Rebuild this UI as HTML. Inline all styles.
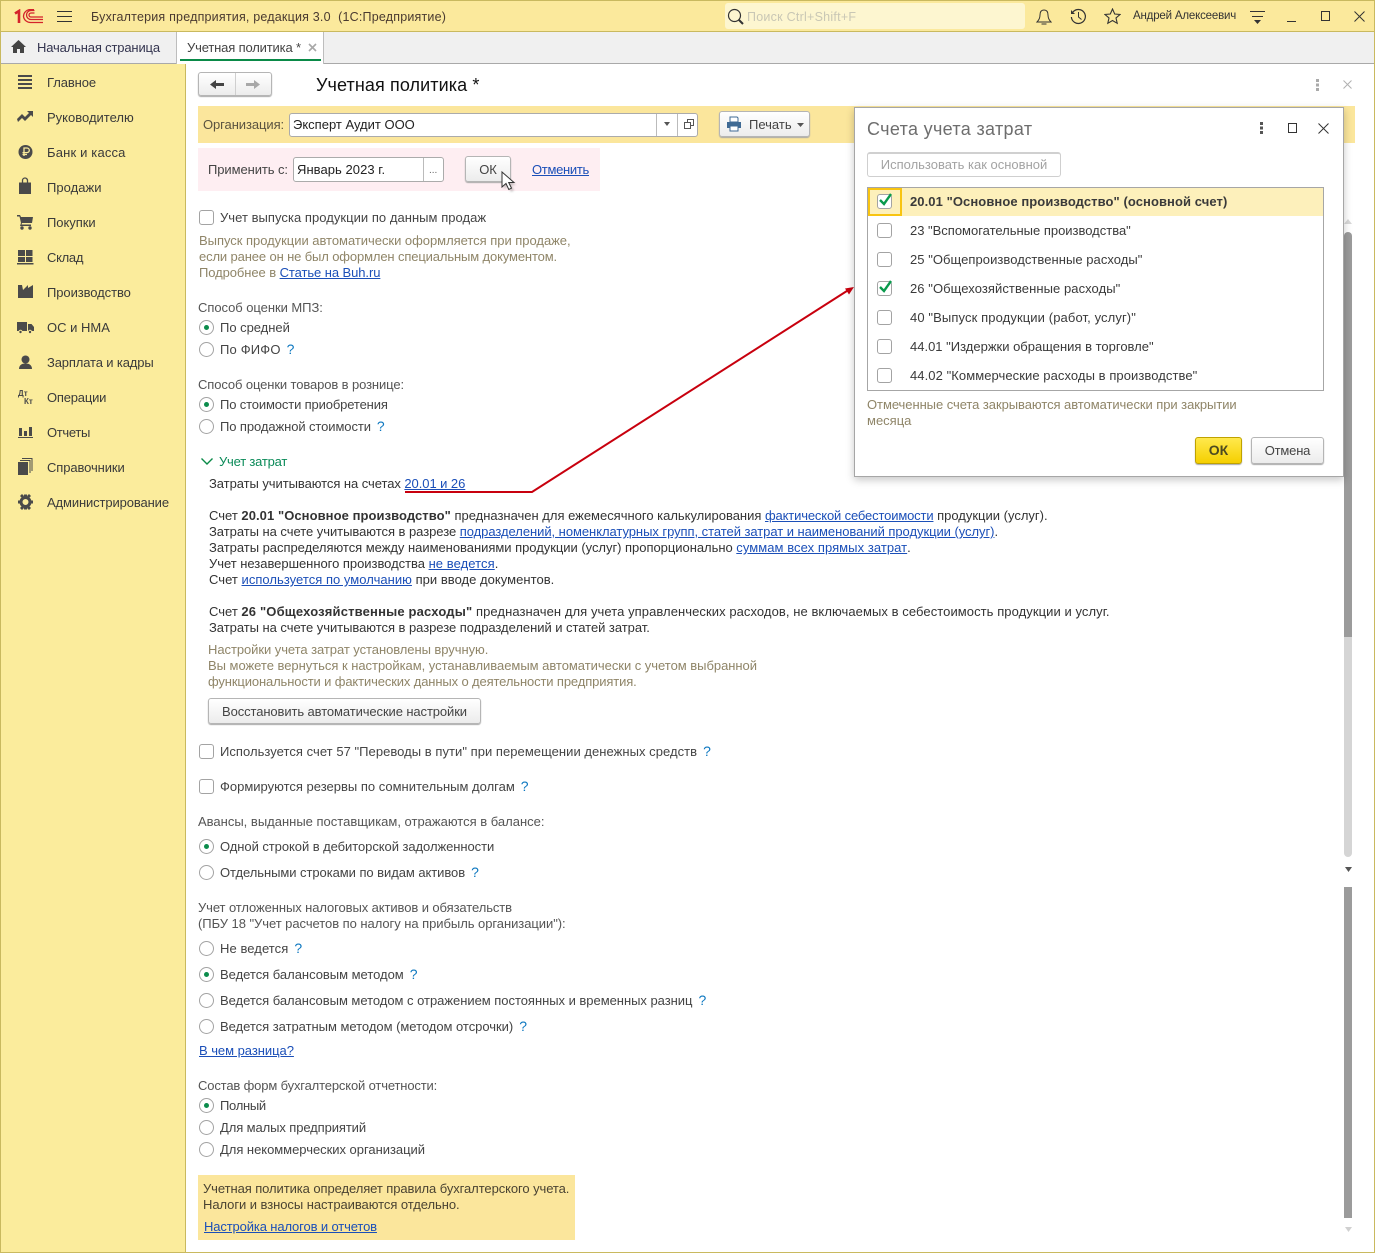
<!DOCTYPE html>
<html lang="ru"><head><meta charset="utf-8"><title>Учетная политика</title>
<style>
html,body{margin:0;padding:0;background:#fff}
#r{position:relative;width:1375px;height:1255px;overflow:hidden;font:13px/16px "Liberation Sans",sans-serif;color:#3d3d3d;letter-spacing:-.04px}
#r div,#r svg{position:absolute}
.t{white-space:nowrap}
.g{color:#8f8568}
a,.a{color:#1b4fb8;text-decoration:underline}
.q{color:#0e78c0;font-weight:400;margin-left:6px;font-size:14px;line-height:0;letter-spacing:0}
.b{background:linear-gradient(#fff,#ececec);border:1px solid #b5b5b5;border-radius:3px;box-shadow:0 1px 1px #a8a8a8;box-sizing:border-box;text-align:center}
.c{width:15px;height:15px;border:1px solid #a3a3a3;border-radius:3px;box-sizing:border-box;background:#fff}
.o{width:15px;height:15px;border:1px solid #a3a3a3;border-radius:50%;box-sizing:border-box;background:#fff}
.o.s::after{content:"";position:absolute;left:4px;top:4px;width:5px;height:5px;border-radius:50%;background:#0c8c4c}
.f{background:#fff;border:1px solid #ababab;border-radius:3px;box-sizing:border-box}
.m{left:47px;color:#3a3a3a}
</style></head><body><div id="r">

<!-- frame -->
<div style="left:0;top:0;width:1375px;height:32px;background:#fbe99c;border-top:1px solid #c9b95f;border-bottom:1px solid #c9b95f;box-sizing:border-box"></div>
<div style="left:0;top:32px;width:1375px;height:32px;background:#f0f0f0;border-bottom:1px solid #a9a9a9;box-sizing:border-box"></div>
<div style="left:0;top:64px;width:186px;height:1189px;background:#fbec9c;border-right:1px solid #c9b95f;box-sizing:border-box"></div>
<div style="left:0;top:0;width:1px;height:1253px;background:#c9b95f"></div>
<div style="left:1374px;top:0;width:1px;height:1253px;background:#c9b95f"></div>
<div style="left:0;top:1252px;width:1375px;height:1px;background:#c9b95f"></div>

<!-- title bar -->
<svg style="left:14px;top:9px" width="30" height="15" viewBox="0 0 30 15"><g fill="none" stroke="#d4232b"><path d="M1 4.500 5 2V14" stroke-width="2.600"/><path d="M29 10.500H17a4.500 4.500 0 0 1 0-9h3.500M29 13.500H16.500a7 7 0 0 1-7-6 7 7 0 0 1 7-7H20M20.500 4H17a2 2 0 0 0 0 4h12" stroke-width="1.300"/></g></svg>
<svg style="left:57px;top:11px" width="15" height="12"><path d="M0 .5h15M0 5.500h15M0 10.500h15" stroke="#333" stroke-width="1"/></svg>
<div class="t" style="left:91px;top:9px;color:#4a3a30;font-size:12.5px;letter-spacing:.2px">Бухгалтерия предприятия, редакция 3.0&nbsp; (1С:Предприятие)</div>
<div style="left:725px;top:3px;width:300px;height:26px;background:#fdf6d0;border-radius:3px"></div>
<svg style="left:727px;top:8px" width="18" height="18"><circle cx="7.500" cy="7.500" r="6" fill="none" stroke="#333" stroke-width="1.200"/><path d="M12 12l4 4" stroke="#333" stroke-width="2"/></svg>
<div class="t" style="left:747px;top:9px;color:#c9c7b5;font-size:12.5px;letter-spacing:.25px">Поиск Ctrl+Shift+F</div>
<svg style="left:1036px;top:8px" width="16" height="18"><path d="M8 2C5 2 4 4 4 7c0 3-1 5-3 7h14c-2-2-3-4-3-7 0-3-1-5-4-5z" fill="none" stroke="#333"/><path d="M5.500 15.500h5v1h-5z" fill="#333"/></svg>
<svg style="left:1070px;top:8px" width="17" height="17"><path d="M3 4a7 7 0 1 1-1.600 5" fill="none" stroke="#333" stroke-width="1.200"/><path d="M1 2v4h4z" fill="#333"/><path d="M8.500 4v5l3 2.500" fill="none" stroke="#333"/></svg>
<svg style="left:1104px;top:8px" width="17" height="17"><path d="M8.500 1l2.200 5 5.300.5-4 3.500 1.200 5.300-4.700-2.800-4.700 2.800L5 10 1 6.500 6.300 6z" fill="none" stroke="#333" stroke-width="1.100"/></svg>
<div class="t" style="left:1133px;top:8px;font-size:11.5px;letter-spacing:-.18px;color:#333">Андрей Алексеевич</div>
<svg style="left:1250px;top:11px" width="16" height="14"><path d="M0 .5h15M2 5.500h11" stroke="#333"/><path d="M4 9h7l-3.500 4z" fill="#333"/></svg>
<svg style="left:1287px;top:12px" width="10" height="10"><path d="M0 9.500h9" stroke="#333"/></svg>
<svg style="left:1321px;top:11px" width="10" height="11"><rect x=".5" y=".5" width="8" height="9" fill="none" stroke="#333"/></svg>
<svg style="left:1354px;top:11px" width="11" height="11"><path d="M.5.500l10 10M10.500.500l-10 10" stroke="#333"/></svg>

<!-- tabs -->
<svg style="left:11px;top:40px" width="15" height="13"><path d="M7.500 0 15 7h-2v6H9V9H6v4H2V7H0z" fill="#444"/></svg>
<div class="t" style="left:37px;top:40px;color:#33344f;letter-spacing:-.16px">Начальная страница</div>
<div style="left:176px;top:32px;width:148px;height:32px;background:#fff;border-left:1px solid #bdbdbd;border-right:1px solid #bdbdbd;box-sizing:border-box"></div>
<div class="t" style="left:187px;top:40px;color:#444;letter-spacing:-.16px">Учетная политика *</div>
<svg style="left:308px;top:43px" width="9" height="9"><path d="M1 1l7 7M8 1L1 8" stroke="#a8a8a8" stroke-width="1.600"/></svg>
<div style="left:180px;top:59px;width:141px;height:2px;background:#0a8a48"></div>

<!-- sidebar -->
<div class="t m" style="top:75px;letter-spacing:-.1px">Главное</div>
<div class="t m" style="top:110px;letter-spacing:0">Руководителю</div>
<div class="t m" style="top:145px;letter-spacing:.17px">Банк и касса</div>
<div class="t m" style="top:180px;letter-spacing:.03px">Продажи</div>
<div class="t m" style="top:215px;letter-spacing:-.05px">Покупки</div>
<div class="t m" style="top:250px;letter-spacing:-.3px">Склад</div>
<div class="t m" style="top:285px;letter-spacing:-.08px">Производство</div>
<div class="t m" style="top:320px;letter-spacing:0">ОС и НМА</div>
<div class="t m" style="top:355px;letter-spacing:-.14px">Зарплата и кадры</div>
<div class="t m" style="top:390px;letter-spacing:-.2px">Операции</div>
<div class="t m" style="top:425px;letter-spacing:-.33px">Отчеты</div>
<div class="t m" style="top:460px;letter-spacing:-.1px">Справочники</div>
<div class="t m" style="top:495px;letter-spacing:-.12px">Администрирование</div>
<svg style="left:17px;top:74px" width="17" height="440" fill="#4a4a4a">
<path d="M1 1h14v2H1zM1 5h14v2H1zM1 9h14v2H1zM1 13h14v2H1z"/>
<path d="M0 45l5-5 3 3 4-4-2-2h6v6l-2-2-6 6-3-3-4 4z"/>
<circle cx="8.500" cy="78" r="7"/><path d="M7 82v-8h3a2.300 2.300 0 0 1 0 4.600H5.500M5.500 80.500H10" fill="none" stroke="#fbec9c" stroke-width="1.300"/>
<path d="M2 108.500h12v11.500H2z"/><path d="M5.500 108.500v-2a2.500 2.500 0 0 1 5 0v2" fill="none" stroke="#4a4a4a" stroke-width="1.300"/>
<path d="M0 141h3l1 2h12l-1 6H5l-.5 1.500H14V152H3l1-3L2.500 142.500H0z"/><circle cx="5" cy="154" r="1.700"/><circle cx="13" cy="154" r="1.700"/>
<path d="M1 176h7v6H1zM9 176h6.500v6H9zM1 183h7v5H1zM9 183h6.500v5H9zM0 189h16.500v1.500H0z"/>
<path d="M1 224V211h4l1 5 5-5v3l5-3v13z"/>
<path d="M0 248h10v9H0zM11 250h3.500l2.500 3v4h-6z"/><circle cx="3.500" cy="258" r="1.700" stroke="#fbec9c"/><circle cx="13" cy="258" r="1.700" stroke="#fbec9c"/>
<circle cx="8.500" cy="285.500" r="4"/><path d="M2 295c0-4 3-5.500 6.500-5.500s6.500 1.500 6.500 5.500z"/>
<text x="1" y="322" font-size="8" font-weight="700" style="letter-spacing:0">Дт</text><text x="7" y="330" font-size="8" font-weight="700" style="letter-spacing:0">Кт</text>
<path d="M2 354h3v8H2zM7 357h3v5H7zM12 353h3v9H12zM1 363h15v1H1z"/>
<path d="M1 388h10v13H1zM12.500 386h1v13h-1zM14.500 384h1v13h-1zM3 386h10v1H3zM5 384h10v1H5z"/>
<circle cx="8.500" cy="428" r="4.500" fill="none" stroke="#4a4a4a" stroke-width="3"/><path d="M7 420.500h3v3H7zM7 432.500h3v3H7zM1 426.500h3v3H1zM13 426.500h3v3h-3zM3 422l2-2 2 2-2 2zM10 422l2-2 2 2-2 2zM3 434l2 2 2-2-2-2zM10 434l2 2 2-2-2-2z"/>
</svg>

<!-- header -->
<div class="b" style="left:198px;top:72px;width:74px;height:24px"></div>
<div style="left:235px;top:73px;width:1px;height:22px;background:#cfcfcf"></div>
<svg style="left:210px;top:79px" width="15" height="11"><path d="M0 5.500 6 1v3h8v3H6v3z" fill="#444"/></svg>
<svg style="left:246px;top:79px" width="15" height="11"><path d="M14 5.500 8 1v3H0v3h8v3z" fill="#a8a8a8"/></svg>
<div class="t" style="left:316px;top:74px;font-size:18px;line-height:22px;color:#111;letter-spacing:.1px">Учетная политика *</div>
<svg style="left:1315px;top:79px" width="5" height="13" fill="#aaa"><rect x="1" y="0" width="3" height="3"/><rect x="1" y="4.500" width="3" height="3"/><rect x="1" y="9" width="3" height="3"/></svg>
<svg style="left:1343px;top:80px" width="9" height="9"><path d="M.5.500l8 8M8.500.500l-8 8" stroke="#b0b0b0"/></svg>

<!-- org bar -->
<div style="left:198px;top:106px;width:1157px;height:37px;background:#fbe69c"></div>
<div class="t" style="left:203px;top:117px;color:#5a5340;letter-spacing:-.08px">Организация:</div>
<div class="f" style="left:289px;top:113px;width:409px;height:24px"></div>
<div style="left:656px;top:114px;width:1px;height:22px;background:#bbb"></div>
<div style="left:677px;top:114px;width:1px;height:22px;background:#bbb"></div>
<div class="t" style="left:293px;top:117px;color:#222;letter-spacing:0">Эксперт Аудит ООО</div>
<svg style="left:663px;top:122px" width="8" height="5"><path d="M1 0h6L4 4z" fill="#555"/></svg>
<svg style="left:684px;top:119px" width="11" height="11"><path d="M3.500 3V.5h6v6H7M.5 3.500h6v6h-6z" fill="none" stroke="#555"/></svg>
<div class="b" style="left:719px;top:111px;width:91px;height:26px"></div>
<svg style="left:726px;top:116px" width="16" height="16"><path d="M4 1h7l1 1v4H4z" fill="#fff" stroke="#3f6a94"/><path d="M1 6h14v6H1z" fill="#3f6a94"/><path d="M4 10h8v5H4z" fill="#fff" stroke="#3f6a94"/></svg>
<div class="t" style="left:749px;top:117px;color:#444;letter-spacing:0">Печать</div>
<svg style="left:797px;top:123px" width="7" height="4"><path d="M0 0h7L3.500 4z" fill="#555"/></svg>

<!-- apply -->
<div style="left:198px;top:148px;width:402px;height:43px;background:#feeef2"></div>
<div class="t" style="left:208px;top:162px;color:#444;letter-spacing:-.08px">Применить с:</div>
<div class="f" style="left:293px;top:157px;width:151px;height:25px"></div>
<div style="left:423px;top:158px;width:1px;height:23px;background:#bbb"></div>
<div class="t" style="left:297px;top:162px;color:#222;letter-spacing:.05px">Январь 2023 г.</div>
<div class="t" style="left:429px;top:163px;color:#666;font-size:10px">...</div>
<div class="b" style="left:465px;top:156px;width:46px;height:26px;line-height:25px;color:#444">ОК</div>
<div class="t a" style="left:532px;top:162px;letter-spacing:-.3px">Отменить</div>
<svg style="left:498px;top:168px" width="22" height="26"><path d="M6 7v14l4-3 3 6 3-1.500-3-5.500h5z" fill="#777" opacity=".4" filter="blur(1px)"/><path d="M4 4v15l4-3.500 2.800 6 2.700-1.300-2.800-5.700H16z" fill="#fff" stroke="#333"/></svg>

<!-- content -->
<div class="c" style="left:199px;top:210px"></div>
<div class="t" style="left:220px;top:210px;color:#444;letter-spacing:.04px">Учет выпуска продукции по данным продаж</div>
<div class="t g" style="left:199px;top:233px;letter-spacing:-.03px">Выпуск продукции автоматически оформляется при продаже,</div>
<div class="t g" style="left:199px;top:249px;letter-spacing:-.13px">если ранее он не был оформлен специальным документом.</div>
<div class="t g" style="left:199px;top:265px;letter-spacing:-.08px">Подробнее в <a>Статье на Buh.ru</a></div>

<div class="t" style="left:198px;top:300px;color:#555;letter-spacing:-.05px">Способ оценки МПЗ:</div>
<div class="o s" style="left:199px;top:320px"></div><div class="t" style="left:220px;top:320px;color:#444;letter-spacing:-.03px">По средней</div>
<div class="o" style="left:199px;top:342px"></div><div class="t" style="left:220px;top:342px;color:#444;letter-spacing:.17px">По ФИФО<span class="q">?</span></div>

<div class="t" style="left:198px;top:377px;color:#555;letter-spacing:-.11px">Способ оценки товаров в рознице:</div>
<div class="o s" style="left:199px;top:397px"></div><div class="t" style="left:220px;top:397px;color:#444;letter-spacing:-.14px">По стоимости приобретения</div>
<div class="o" style="left:199px;top:419px"></div><div class="t" style="left:220px;top:419px;color:#444;letter-spacing:-.09px">По продажной стоимости<span class="q">?</span></div>

<svg style="left:200px;top:457px" width="14" height="9"><path d="M1.500 1.500 7 7l5.500-5.500" fill="none" stroke="#0a8a48" stroke-width="1.400"/></svg>
<div class="t" style="left:219px;top:454px;color:#0a8a58;letter-spacing:-.2px">Учет затрат</div>
<div class="t" style="left:209px;top:476px;color:#333;letter-spacing:-.06px">Затраты учитываются на счетах <a>20.01 и 26</a></div>

<div class="t" style="left:209px;top:508px;color:#333;letter-spacing:-.01px"><span style="letter-spacing:0">Счет </span><b style="letter-spacing:.07px">20.01 "Основное производство"</b> предназначен для ежемесячного калькулирования <a style="letter-spacing:-.15px">фактической себестоимости</a> <span style="letter-spacing:0">продукции (услуг).</span></div>
<div class="t" style="left:209px;top:524px;color:#333;letter-spacing:-.04px">Затраты на счете учитываются в разрезе <a style="letter-spacing:-.05px">подразделений, номенклатурных групп, статей затрат и наименований продукции (услуг)</a>.</div>
<div class="t" style="left:209px;top:540px;color:#333;letter-spacing:-.03px">Затраты распределяются между наименованиями продукции (услуг) пропорционально <a style="letter-spacing:.06px">суммам всех прямых затрат</a>.</div>
<div class="t" style="left:209px;top:556px;color:#333;letter-spacing:-.03px">Учет незавершенного производства <a style="letter-spacing:.07px">не ведется</a>.</div>
<div class="t" style="left:209px;top:572px;color:#333;letter-spacing:.03px">Счет <a>используется по умолчанию</a> при вводе документов.</div>
<div class="t" style="left:209px;top:604px;color:#333;letter-spacing:.07px"><span style="letter-spacing:0">Счет </span><b style="letter-spacing:.17px">26 "Общехозяйственные расходы"</b> предназначен для учета управленческих расходов, не включаемых в себестоимость продукции и услуг.</div>
<div class="t" style="left:209px;top:620px;color:#333;letter-spacing:-.04px">Затраты на счете учитываются в разрезе подразделений и статей затрат.</div>
<div class="t g" style="left:208px;top:642px;letter-spacing:-.06px">Настройки учета затрат установлены вручную.</div>
<div class="t g" style="left:208px;top:658px;letter-spacing:-.03px">Вы можете вернуться к настройкам, устанавливаемым автоматически с учетом выбранной</div>
<div class="t g" style="left:208px;top:674px;letter-spacing:-.13px">функциональности и фактических данных о деятельности предприятия.</div>
<div class="b" style="left:208px;top:698px;width:273px;height:26px;line-height:26px;color:#444;letter-spacing:-.1px">Восстановить автоматические настройки</div>

<div class="c" style="left:199px;top:744px"></div><div class="t" style="left:220px;top:744px;color:#444;letter-spacing:.04px">Используется счет 57 "Переводы в пути" при перемещении денежных средств<span class="q">?</span></div>
<div class="c" style="left:199px;top:779px"></div><div class="t" style="left:220px;top:779px;color:#444;letter-spacing:0">Формируются резервы по сомнительным долгам<span class="q">?</span></div>

<div class="t" style="left:198px;top:814px;color:#555;letter-spacing:0">Авансы, выданные поставщикам, отражаются в балансе:</div>
<div class="o s" style="left:199px;top:839px"></div><div class="t" style="left:220px;top:839px;color:#444;letter-spacing:-.06px">Одной строкой в дебиторской задолженности</div>
<div class="o" style="left:199px;top:865px"></div><div class="t" style="left:220px;top:865px;color:#444;letter-spacing:-.06px">Отдельными строками по видам активов<span class="q">?</span></div>

<div class="t" style="left:198px;top:900px;color:#555;letter-spacing:-.09px">Учет отложенных налоговых активов и обязательств</div>
<div class="t" style="left:198px;top:916px;color:#555;letter-spacing:-.05px">(ПБУ 18 "Учет расчетов по налогу на прибыль организации"):</div>
<div class="o" style="left:199px;top:941px"></div><div class="t" style="left:220px;top:941px;color:#444;letter-spacing:.07px">Не ведется<span class="q">?</span></div>
<div class="o s" style="left:199px;top:967px"></div><div class="t" style="left:220px;top:967px;color:#444;letter-spacing:-.02px">Ведется балансовым методом<span class="q">?</span></div>
<div class="o" style="left:199px;top:993px"></div><div class="t" style="left:220px;top:993px;color:#444;letter-spacing:-.03px">Ведется балансовым методом с отражением постоянных и временных разниц<span class="q">?</span></div>
<div class="o" style="left:199px;top:1019px"></div><div class="t" style="left:220px;top:1019px;color:#444;letter-spacing:-.03px">Ведется затратным методом (методом отсрочки)<span class="q">?</span></div>
<div class="t a" style="left:199px;top:1043px;letter-spacing:-.04px">В чем разница?</div>

<div class="t" style="left:198px;top:1078px;color:#555;letter-spacing:-.15px">Состав форм бухгалтерской отчетности:</div>
<div class="o s" style="left:199px;top:1098px"></div><div class="t" style="left:220px;top:1098px;color:#444;letter-spacing:-.3px">Полный</div>
<div class="o" style="left:199px;top:1120px"></div><div class="t" style="left:220px;top:1120px;color:#444;letter-spacing:-.1px">Для малых предприятий</div>
<div class="o" style="left:199px;top:1142px"></div><div class="t" style="left:220px;top:1142px;color:#444;letter-spacing:-.03px">Для некоммерческих организаций</div>

<div style="left:198px;top:1175px;width:377px;height:65px;background:#fbe69c"></div>
<div class="t" style="left:203px;top:1181px;color:#4a4332;letter-spacing:-.08px">Учетная политика определяет правила бухгалтерского учета.</div>
<div class="t" style="left:203px;top:1197px;color:#4a4332;letter-spacing:-.06px">Налоги и взносы настраиваются отдельно.</div>
<div class="t a" style="left:204px;top:1219px;letter-spacing:-.13px">Настройка налогов и отчетов</div>

<!-- scrollbars -->
<svg style="left:1344px;top:215px" width="9" height="1020">
<path d="M0 9 4 4l4 5z" fill="#d8d8d8"/>
<path d="M0 21a4 4 0 0 1 8 0V422H0z" fill="#9b9b9b"/>
<path d="M0 422h8v216a4 4 0 0 1-8 0z" fill="#d5d5d5"/>
<path d="M1 652h7l-3.500 5z" fill="#555"/>
<path d="M0 672h8v331H0z" fill="#9b9b9b"/>
<path d="M1 1012h7l-3.500 5z" fill="#d0d0d0"/>
</svg>

<!-- red arrow -->
<svg style="left:400px;top:280px" width="460" height="216"><path d="M5 212H132L450 9" fill="none" stroke="#c8000e" stroke-width="2"/><path d="M454 7l-9 1.500 4 6z" fill="#c8000e"/></svg>

<!-- dialog -->
<div style="left:854px;top:107px;width:490px;height:370px;background:#fff;border:1px solid #a6a6a6;box-sizing:border-box;box-shadow:0 3px 8px rgba(0,0,0,.22)"></div>
<div class="t" style="left:867px;top:117px;font-size:18px;line-height:24px;color:#6e6e6e;letter-spacing:.33px">Счета учета затрат</div>
<svg style="left:1259px;top:122px" width="5" height="13" fill="#555"><rect x="1" y="0" width="3" height="3"/><rect x="1" y="4.500" width="3" height="3"/><rect x="1" y="9" width="3" height="3"/></svg>
<svg style="left:1288px;top:123px" width="10" height="11"><rect x=".5" y=".5" width="8" height="9" fill="none" stroke="#333"/></svg>
<svg style="left:1318px;top:123px" width="11" height="11"><path d="M.5.500l10 10M10.500.500l-10 10" stroke="#333"/></svg>
<div style="left:867px;top:152px;width:194px;height:25px;background:#fff;border:1px solid #cfcfcf;border-top:2px solid #d0d0d0;border-radius:3px;box-sizing:border-box;text-align:center;line-height:22px;color:#a3a3a3;letter-spacing:0">Использовать как основной</div>

<div style="left:867px;top:187px;width:457px;height:204px;background:#fff;border:1px solid #a6a6a6;box-sizing:border-box"></div>
<div style="left:868px;top:188px;width:455px;height:28px;background:#fdf0bb"></div>
<div style="left:868px;top:188px;width:34px;height:28px;border:2px solid #f8c411;box-sizing:border-box"></div>
<div class="c" style="left:877px;top:194px"></div>
<div class="c" style="left:877px;top:223px"></div>
<div class="c" style="left:877px;top:252px"></div>
<div class="c" style="left:877px;top:281px"></div>
<div class="c" style="left:877px;top:310px"></div>
<div class="c" style="left:877px;top:339px"></div>
<div class="c" style="left:877px;top:368px"></div>
<svg style="left:878px;top:192px" width="16" height="16"><path d="M2 8l4 4 7-10" fill="none" stroke="#0a9a4c" stroke-width="2.400"/></svg>
<svg style="left:878px;top:279px" width="16" height="16"><path d="M2 8l4 4 7-10" fill="none" stroke="#0a9a4c" stroke-width="2.400"/></svg>
<div class="t" style="left:910px;top:194px;color:#3a3a3a;letter-spacing:.08px"><b>20.01 "Основное производство" (основной счет)</b></div>
<div class="t" style="left:910px;top:223px;color:#3a3a3a;letter-spacing:-.01px">23 "Вспомогательные производства"</div>
<div class="t" style="left:910px;top:252px;color:#3a3a3a;letter-spacing:.05px">25 "Общепроизводственные расходы"</div>
<div class="t" style="left:910px;top:281px;color:#3a3a3a;letter-spacing:.07px">26 "Общехозяйственные расходы"</div>
<div class="t" style="left:910px;top:310px;color:#3a3a3a;letter-spacing:.11px">40 "Выпуск продукции (работ, услуг)"</div>
<div class="t" style="left:910px;top:339px;color:#3a3a3a;letter-spacing:0">44.01 "Издержки обращения в торговле"</div>
<div class="t" style="left:910px;top:368px;color:#3a3a3a;letter-spacing:.07px">44.02 "Коммерческие расходы в производстве"</div>
<div class="t g" style="left:867px;top:397px;letter-spacing:-.06px">Отмеченные счета закрываются автоматически при закрытии</div>
<div class="t g" style="left:867px;top:413px;letter-spacing:0">месяца</div>
<div style="left:1195px;top:437px;width:47px;height:27px;background:linear-gradient(#ffe94d,#f5cf00);border:1px solid #bfa200;border-radius:3px;box-sizing:border-box;box-shadow:0 1px 1px #a8a8a8;text-align:center;line-height:25px;font-weight:700;color:#4d4a20;font-size:14px;letter-spacing:0">ОК</div>
<div class="b" style="left:1251px;top:437px;width:73px;height:27px;line-height:25px;color:#444;letter-spacing:-.2px">Отмена</div>

</div></body></html>
